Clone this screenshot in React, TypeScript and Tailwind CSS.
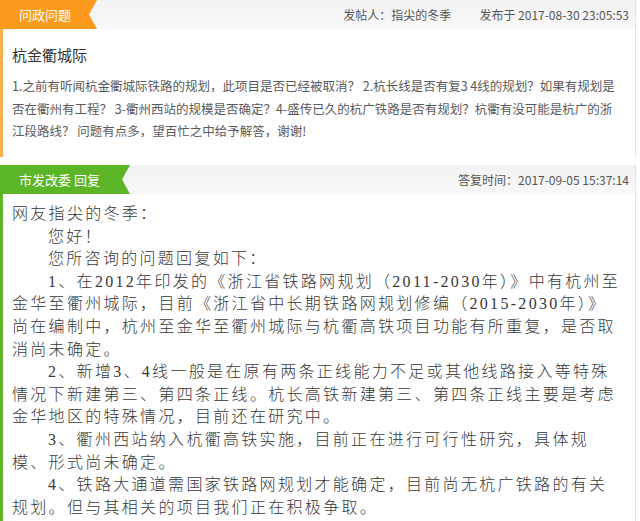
import React from "react";

const sans = "font-['Microsoft_YaHei','Noto_Sans_CJK_SC',sans-serif]";
const serif = "font-['Liberation_Serif','Noto_Sans_CJK_SC',serif]";

const questionLines = [
  "1.之前有听闻杭金衢城际铁路的规划，此项目是否已经被取消？ 2.杭长线是否有复3 4线的规划？如果有规划是",
  "否在衢州有工程？ 3-衢州西站的规模是否确定？4-盛传已久的杭广铁路是否有规划？杭衢有没可能是杭广的浙",
  "江段路线？ 问题有点多，望百忙之中给予解答，谢谢!",
];

// [text, indented]
const replyLines: [string, boolean][] = [
  ["网友指尖的冬季：", false],
  ["您好！", true],
  ["您所咨询的问题回复如下：", true],
  ["1、在2012年印发的《浙江省铁路网规划（2011-2030年）》中有杭州至", true],
  ["金华至衢州城际，目前《浙江省中长期铁路网规划修编（2015-2030年）》", false],
  ["尚在编制中，杭州至金华至衢州城际与杭衢高铁项目功能有所重复，是否取", false],
  ["消尚未确定。", false],
  ["2、新增3、4线一般是在原有两条正线能力不足或其他线路接入等特殊", true],
  ["情况下新建第三、第四条正线。杭长高铁新建第三、第四条正线主要是考虑", false],
  ["金华地区的特殊情况，目前还在研究中。", false],
  ["3、衢州西站纳入杭衢高铁实施，目前正在进行可行性研究，具体规", true],
  ["模、形式尚未确定。", false],
  ["4、铁路大通道需国家铁路网规划才能确定，目前尚无杭广铁路的有关", true],
  ["规划。但与其相关的项目我们正在积极争取。", false],
];

const Tab = ({ label, color, width }: { label: string; color: string; width: string }) => (
  <div
    className={`${color} ${width} h-full flex items-center pl-[19px] text-white text-[13px] [clip-path:polygon(0_0,100%_0,calc(100%-8px)_50%,100%_100%,0_100%)]`}
  >
    {label}
  </div>
);

export default function App() {
  return (
    <div className={`w-[640px] h-[521px] overflow-hidden bg-white ${sans}`}>
      {/* 问政问题 */}
      <section className="w-[636px] h-[157px] border-l-[3px] border-l-[#f9b04f] border-r border-r-[#e4e4e4]">
        <div className="h-[29px] flex items-stretch justify-between bg-gradient-to-b from-[#f2f2f2] to-[#f8f8f8] -ml-[3px]">
          <Tab label="问政问题" color="bg-[#fb9a1c]" width="w-[97px]" />
          <div className="flex items-center gap-[28px] pr-[6px] text-[12px] text-[#555]">
            <span>发帖人：指尖的冬季</span>
            <span>发布于 2017-08-30 23:05:53</span>
          </div>
        </div>
        <div className="pl-[9px] pt-[15px]">
          <h2 className="text-[15px] leading-[22px] font-normal text-[#333] mb-[9px]">杭金衢城际</h2>
          <div className="text-[12.5px] leading-[22.5px] text-[#5a5a5a] whitespace-nowrap">
            {questionLines.map((l, i) => (
              <div key={i}>{l}</div>
            ))}
          </div>
        </div>
      </section>

      {/* 市发改委 回复 */}
      <section className="mt-[8px] w-[636px] h-[360px] border-l-[3px] border-l-[#62b52a] border-r border-r-[#e4e4e4]">
        <div className="h-[29px] flex items-stretch justify-between bg-gradient-to-b from-[#f2f2f2] to-[#f8f8f8] -ml-[3px]">
          <Tab label="市发改委 回复" color="bg-[#5cb527]" width="w-[130px]" />
          <div className="flex items-center pr-[6px] text-[12px] text-[#555]">
            <span>答复时间：2017-09-05 15:37:14</span>
          </div>
        </div>
        <div className={`pl-[9px] pt-[9px] text-[16px] leading-[22.6px] tracking-[2.3px] font-light text-[#383838] whitespace-nowrap ${serif}`}>
          {replyLines.map(([t, ind], i) => (
            <div key={i} className={ind ? "pl-[36px]" : ""}>
              {t}
            </div>
          ))}
        </div>
      </section>
    </div>
  );
}
